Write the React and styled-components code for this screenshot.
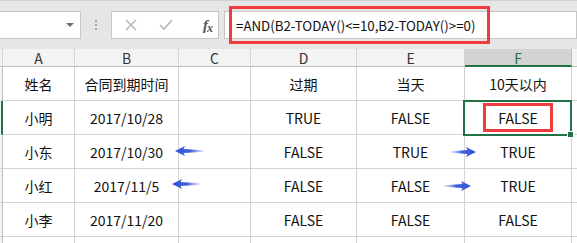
import React from 'react';
import styled, { createGlobalStyle } from 'styled-components';

const Global = createGlobalStyle`
  html, body { margin: 0; padding: 0; background: #fff; overflow: hidden; }
  body { font-family: "Noto Sans CJK SC", "Noto Sans", sans-serif; }
`;

const Page = styled.div`
  width: 577px;
  height: 243px;
  position: relative;
  overflow: hidden;
`;

const Toolbar = styled.div`
  height: 49px;
  box-sizing: border-box;
  background: #e6e6e6;
  border-top: 1px solid #d2d2d2;
  padding-top: 10px;
  display: flex;
  align-items: flex-start;
`;

const Box = styled.div`
  height: 28px;
  box-sizing: border-box;
  background: #fff;
  border: 1px solid #c6c6c6;
  display: flex;
  align-items: center;
`;

const NameBox = styled(Box)`
  width: 82px;
  margin-left: -1px;
  justify-content: flex-end;
  padding-right: 6px;
`;

const Caret = styled.span`
  width: 0;
  height: 0;
  border-left: 4px solid transparent;
  border-right: 4px solid transparent;
  border-top: 4px solid #6f6f6f;
`;

const Grip = styled.div`
  width: 30px;
  height: 28px;
  display: flex;
  flex-direction: column;
  align-items: center;
  justify-content: center;
  gap: 2px;
  span { width: 2px; height: 2px; background: #a6a6a6; }
`;

const FnBox = styled(Box)`
  width: 108px;
  padding: 0 0 0 13px;
  gap: 22px;
`;

const FxLabel = styled.span`
  font-family: "Liberation Serif", serif;
  font-style: italic;
  font-weight: bold;
  font-size: 15px;
  color: #555;
  margin-left: 8px;
  letter-spacing: -1px;
  small { font-size: 12px; position: relative; top: 2px; }
`;

const FormulaBox = styled(Box)`
  flex: 1;
  margin-left: 5px;
  padding-left: 11px;
  font-size: 13.3px;
  color: #111;
  white-space: nowrap;
`;

const Highlight = styled.div`
  position: absolute;
  box-sizing: border-box;
  border: 3px solid #f03c3c;
`;

const Grid = styled.div`
  display: grid;
  grid-template-columns: 3px 72px 104px 72px 106px 108px 107px 20px;
  grid-template-rows: 18px repeat(6, 34px);
`;

const Cell = styled.div`
  box-sizing: border-box;
  border-right: 1px solid #d4d4d4;
  border-bottom: 1px solid #d4d4d4;
  display: flex;
  align-items: center;
  justify-content: center;
  font-size: 14px;
  color: #111;
  white-space: nowrap;
`;

const ColHead = styled(Cell)`
  background: ${p => (p.$active ? '#d3d3d3' : '#f3f3f3')};
  border-right-color: ${p => (p.$active ? '#bdbdbd' : '#d4d4d4')};
  border-bottom: ${p => (p.$active ? '2px solid #217346' : '1px solid #bdbdbd')};
  color: ${p => (p.$active ? '#217346' : '#333')};
  padding-top: 1px;
`;

const RowHead = styled(Cell)`
  background: #f3f3f3;
  border-right: ${p => (p.$active ? '2px solid #217346' : '1px solid #bdbdbd')};
`;

const Selection = styled.div`
  position: absolute;
  left: 463px;
  top: 100px;
  width: 109px;
  height: 36px;
  box-sizing: border-box;
  border: 2px solid #217346;
  &::after {
    content: '';
    position: absolute;
    right: -4px;
    bottom: -4px;
    width: 5px;
    height: 5px;
    background: #217346;
    border: 1px solid #fff;
  }
`;

const Boxed = styled.span`
  border: 3px solid #f03c3c;
  box-sizing: border-box;
  width: 70px;
  height: 29px;
  display: flex;
  align-items: center;
  justify-content: center;
`;

const ArrowWrap = styled.svg`
  position: absolute;
  overflow: visible;
`;

const Arrow = ({ x, y, w, dir, id }) => (
  <ArrowWrap
    width={w}
    height="10"
    viewBox={`0 0 ${w} 10`}
    style={{ left: x, top: y - 5, transform: dir === 'right' ? 'scaleX(-1)' : 'none' }}
  >
    <defs>
      <linearGradient id={id} x1="0" x2="1" y1="0" y2="0">
        <stop offset="0" stopColor="#3355d6" />
        <stop offset="0.55" stopColor="#3d60dc" />
        <stop offset="1" stopColor="#7f9be9" stopOpacity="0.25" />
      </linearGradient>
    </defs>
    <path
      d={`M0 5 L10 0 L8.5 3 L${w} 4.2 L${w} 5.8 L8.5 7 L10 10 Z`}
      fill={`url(#${id})`}
    />
  </ArrowWrap>
);

const cols = ['A', 'B', 'C', 'D', 'E', 'F'];
const rows = [
  ['姓名', '合同到期时间', '', '过期', '当天', '10天以内'],
  ['小明', '2017/10/28', '', 'TRUE', 'FALSE', 'FALSE'],
  ['小东', '2017/10/30', '', 'FALSE', 'TRUE', 'TRUE'],
  ['小红', '2017/11/5', '', 'FALSE', 'FALSE', 'TRUE'],
  ['小李', '2017/11/20', '', 'FALSE', 'FALSE', 'FALSE'],
  ['', '', '', '', '', ''],
];

export default function App() {
  return (
    <Page>
      <Global />
      <Toolbar>
        <NameBox><Caret /></NameBox>
        <Grip><span /><span /><span /></Grip>
        <FnBox>
          <svg width="12" height="12" viewBox="0 0 12 12">
            <path d="M1 1 L11 11 M11 1 L1 11" stroke="#b4b4b4" strokeWidth="1.4" />
          </svg>
          <svg width="14" height="12" viewBox="0 0 14 12">
            <path d="M1 6 L5 10 L13 1" stroke="#b4b4b4" strokeWidth="1.6" fill="none" />
          </svg>
          <FxLabel>f<small>x</small></FxLabel>
        </FnBox>
        <FormulaBox>=AND(B2-TODAY()&lt;=10,B2-TODAY()&gt;=0)</FormulaBox>
      </Toolbar>
      <Highlight style={{ left: 229, top: 6, width: 261, height: 38 }} />
      <Grid>
        <ColHead />
        {cols.map(c => (
          <ColHead key={c} $active={c === 'F'}>{c}</ColHead>
        ))}
        <ColHead />
        {rows.map((r, i) => (
          <React.Fragment key={i}>
            <RowHead $active={i === 1} />
            {r.map((v, j) => (
              <Cell key={j}>
                {i === 1 && j === 5 ? <Boxed>{v}</Boxed> : v}
              </Cell>
            ))}
            <Cell />
          </React.Fragment>
        ))}
      </Grid>
      <Selection />
      <Arrow id="a1" x={175} y={151} w={29} dir="left" />
      <Arrow id="a2" x={172} y={184} w={28} dir="left" />
      <Arrow id="a3" x={451} y={152} w={25} dir="right" />
      <Arrow id="a4" x={444} y={186} w={27} dir="right" />
    </Page>
  );
}
